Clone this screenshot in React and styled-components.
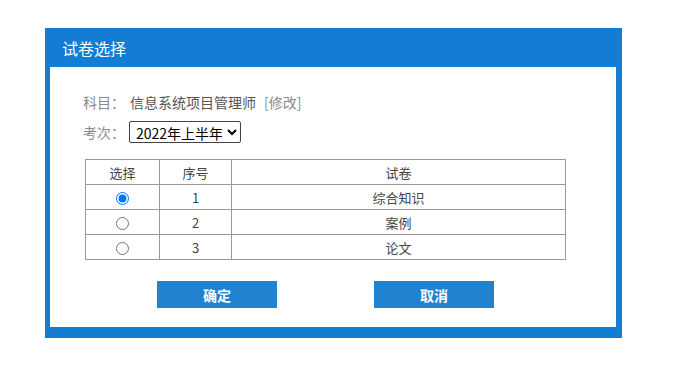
import React, { useState } from "react";
import styled, { createGlobalStyle } from "styled-components";

const GlobalStyle = createGlobalStyle`
  body {
    margin: 0;
    background: #fff;
    font-family: "Noto Sans CJK SC", "Noto Sans", sans-serif;
  }
`;

const Page = styled.div`
  padding: 28px 0 0 45px;
`;

const Dialog = styled.div`
  width: 577px;
  box-sizing: border-box;
  background: #137dd3;
  padding: 0 6px 11px 5px;
`;

const Header = styled.div`
  height: 39px;
  display: flex;
  align-items: center;
  padding-left: 12px;
  color: #fff;
  font-size: 16px;
`;

const Body = styled.div`
  background: #fff;
  padding: 24px 0 19px 33px;
`;

const Field = styled.div`
  display: flex;
  align-items: center;
  height: 22px;
  font-size: 14px;
  margin-bottom: ${p => p.gap || 0}px;
`;

const Label = styled.span`
  color: #8a8a8a;
  width: 47px;
`;

const Value = styled.span`
  color: #555;
`;

const Link = styled.span`
  color: #8a8a8a;
  margin-left: 8px;
  cursor: pointer;
`;

const Select = styled.select`
  height: 22px;
  font-size: 14px;
  font-family: inherit;
  color: #000;
  border: 1px solid #444;
  border-radius: 2px;
  background: #fff;
  padding: 0 2px;
  width: 112px;
  margin-left: -1px;
`;

const Content = styled.div`
  width: 481px;
  margin-left: 2px;
`;

const Table = styled.table`
  width: 100%;
  border-collapse: collapse;
  margin-top: 16px;
  font-size: 13px;
  color: #444;
  td,
  th {
    border: 1px solid #999;
    height: 24px;
    padding: 0;
    text-align: center;
    font-weight: normal;
  }
`;

const Radio = styled.input`
  margin: 0;
  width: 13px;
  height: 13px;
  vertical-align: middle;
`;

const Actions = styled.div`
  display: flex;
  justify-content: center;
  gap: 97px;
  margin-top: 21px;
`;

const Button = styled.button`
  width: 120px;
  height: 27px;
  border: none;
  background: #2183cf;
  color: #fff;
  font-family: inherit;
  font-size: 14px;
  font-weight: bold;
  cursor: pointer;
`;

const papers = ["综合知识", "案例", "论文"];

export default function App() {
  const [selected, setSelected] = useState(0);
  return (
    <Page>
      <GlobalStyle />
      <Dialog>
        <Header>试卷选择</Header>
        <Body>
          <Field gap={8}>
            <Label>科目：</Label>
            <Value>信息系统项目管理师</Value>
            <Link>[修改]</Link>
          </Field>
          <Field>
            <Label>考次：</Label>
            <Select defaultValue="2022a">
              <option value="2022a">2022年上半年</option>
              <option value="2021b">2021年下半年</option>
            </Select>
          </Field>
          <Content>
            <Table>
              <colgroup>
                <col style={{ width: 74 }} />
                <col style={{ width: 72 }} />
                <col />
              </colgroup>
              <thead>
                <tr>
                  <th>选择</th>
                  <th>序号</th>
                  <th>试卷</th>
                </tr>
              </thead>
              <tbody>
                {papers.map((name, i) => (
                  <tr key={name}>
                    <td>
                      <Radio
                        type="radio"
                        name="paper"
                        checked={selected === i}
                        onChange={() => setSelected(i)}
                      />
                    </td>
                    <td>{i + 1}</td>
                    <td>{name}</td>
                  </tr>
                ))}
              </tbody>
            </Table>
            <Actions>
              <Button>确定</Button>
              <Button>取消</Button>
            </Actions>
          </Content>
        </Body>
      </Dialog>
    </Page>
  );
}
